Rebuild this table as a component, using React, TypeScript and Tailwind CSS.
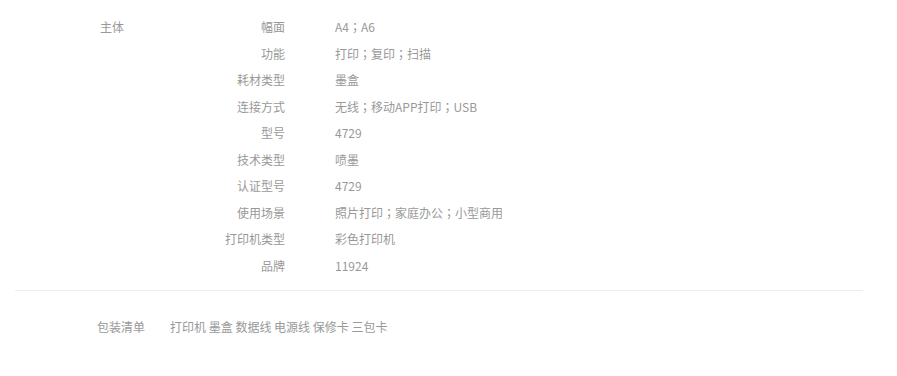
const specs: [string, string][] = [
  ["幅面", "A4；A6"],
  ["功能", "打印；复印；扫描"],
  ["耗材类型", "墨盒"],
  ["连接方式", "无线；移动APP打印；USB"],
  ["型号", "4729"],
  ["技术类型", "喷墨"],
  ["认证型号", "4729"],
  ["使用场景", "照片打印；家庭办公；小型商用"],
  ["打印机类型", "彩色打印机"],
  ["品牌", "11924"],
]

// the reference font centres the full-width semicolon, as the TC face does
function Value({ text }: { text: string }) {
  const parts = text.split("；")
  return (
    <>
      {parts.map((p, i) => (
        <span key={i}>
          {p}
          {i < parts.length - 1 && (
            <span style={{ fontFamily: '"Noto Sans CJK TC", sans-serif' }}>；</span>
          )}
        </span>
      ))}
    </>
  )
}

export default function App() {
  return (
    <div
      className="w-[897px] h-[376px] bg-white text-[12px] text-[#999]"
      style={{ fontFamily: '"Microsoft YaHei", "Noto Sans CJK SC", sans-serif' }}
    >
      <div className="ml-[15px] w-[848px]">
        {/* 主体 */}
        <div className="flex pt-[14px] pb-[11px] border-b border-[#eee]">
          <div className="w-[185px] pl-[85px] shrink-0 leading-[26.5px]">主体</div>
          <div className="flex flex-col">
            {specs.map(([label, value]) => (
              <div key={label} className="flex h-[26.5px] items-center">
                <div className="w-[85px] text-right">{label}</div>
                <div className="ml-[50px]">
                  <Value text={value} />
                </div>
              </div>
            ))}
          </div>
        </div>

        {/* 包装清单 */}
        <div className="flex items-center h-[26.5px] mt-[23px] pl-[82px]">
          <div className="w-[48px]">包装清单</div>
          <div className="ml-[25px]">打印机 墨盒 数据线 电源线 保修卡 三包卡</div>
        </div>
      </div>
    </div>
  )
}
